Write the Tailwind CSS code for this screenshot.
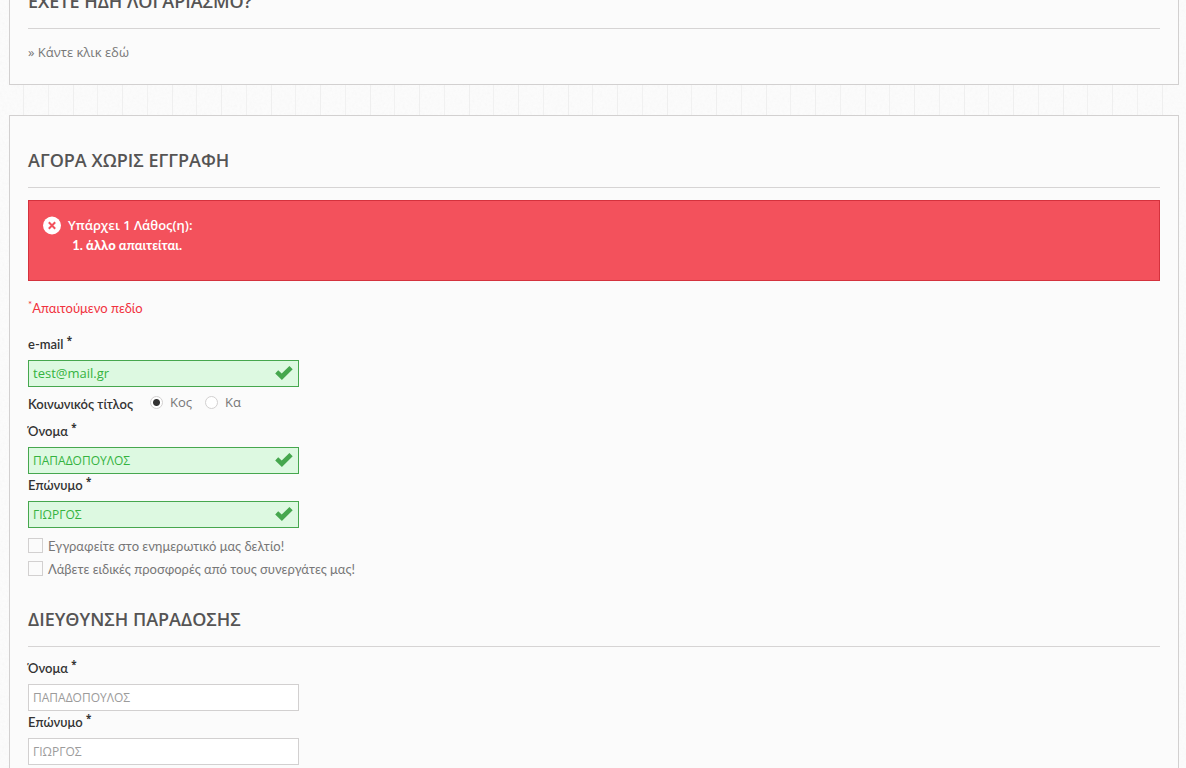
<!DOCTYPE html>
<html lang="el">
<head>
    <meta charset="UTF-8">
    <meta name="viewport" content="width=device-width, initial-scale=1.0">
    <title>Αγορά χωρίς εγγραφή</title>
    <script src="https://cdn.jsdelivr.net/npm/@tailwindcss/browser@4"></script>
</head>
<body class="relative overflow-hidden h-screen bg-[#fcfcfc] font-['Lato',sans-serif] text-[13px] leading-5 text-[#777777]">
    <!-- Paper texture -->
    <svg class="absolute inset-0 size-full opacity-[0.05]" aria-hidden="true">
        <filter id="paper">
            <feTurbulence type="fractalNoise" baseFrequency="0.4" numOctaves="2" stitchTiles="stitch"/>
            <feColorMatrix type="saturate" values="0"/>
        </filter>
        <rect width="100%" height="100%" filter="url(#paper)"/>
    </svg>

    <main class="relative -mt-11 pl-[9px] pr-[7px]">
        <div class="flex flex-col gap-[30px] bg-[linear-gradient(90deg,transparent_14px,#efefef_14px,#efefef_15px,transparent_15px,transparent_39px,#f1f1f1_39px,#f1f1f1_40px,transparent_40px,transparent_64px,#efefef_64px,#efefef_65px,transparent_65px,transparent_88px,#f1f1f1_88px,#f1f1f1_89px,transparent_89px)] bg-[length:99px_100%]">

            <!-- Existing account -->
            <section class="border border-[#d2d0d0] bg-[#fbfbfb] px-[18px] pt-[33px] pb-[22px]">
                <h3 class="border-b border-[#d6d4d4] pb-4 font-['Open_Sans',sans-serif] text-lg leading-[22px] font-semibold text-[#555454]">ΕΧΕΤΕ ΗΔΗ ΛΟΓΑΡΙΑΣΜΟ?</h3>
                <p class="mt-[13px] font-['Open_Sans',sans-serif]"><a href="#">» Κάντε κλικ εδώ</a></p>
            </section>

            <!-- Guest checkout -->
            <section class="border border-[#d2d0d0] bg-[#fbfbfb] px-[18px] pt-[33px] pb-8">
                <h3 class="border-b border-[#d6d4d4] pb-4 font-['Open_Sans',sans-serif] text-lg leading-[22px] font-semibold text-[#555454]">ΑΓΟΡΑ ΧΩΡΙΣ ΕΓΓΡΑΦΗ</h3>

                <div class="mt-3 flex gap-[6px] border border-[#d4323d] bg-[#f3515c] px-[14px] pt-[14px] pb-[25px] font-bold text-white">
                    <svg class="mt-px size-[19px]" viewBox="0 0 19 19">
                        <circle cx="9" cy="9.5" r="9" fill="#fff"/>
                        <path d="M5.8 6.3l6.4 6.4M12.2 6.3l-6.4 6.4" stroke="#f3515c" stroke-width="2"/>
                    </svg>
                    <div>
                        <p class="font-['Open_Sans',sans-serif] font-semibold">Υπάρχει 1 Λάθος(η):</p>
                        <ol class="list-decimal pl-[18px]">
                            <li><b>άλλο</b> απαιτείται.</li>
                        </ol>
                    </div>
                </div>

                <form>
                    <p class="mt-[17px] text-[#f13340]"><sup>*</sup>Απαιτούμενο πεδίο</p>

                    <div class="mt-4 flex flex-col gap-px">
                        <div>
                            <label for="email" class="block font-semibold text-[#333333]">e-mail <sup class="font-['Open_Sans',sans-serif] font-bold">*</sup></label>
                            <div class="relative mt-[6px] w-[271px]">
                                <input type="email" id="email" value="test@mail.gr" class="block h-[27px] w-full border border-[#46a74e] bg-[#ddf9e1] px-1 pb-[2px] font-['Open_Sans',sans-serif] text-[#35b33f]">
                                <svg class="absolute top-[6px] right-[6px] h-[14px] w-[18px]" viewBox="0 0 18 14"><path d="M0.2 7.4L3.2 4.3L6.7 7.6L14.4 0.1L17.7 3.3L6.9 13.9Z" fill="#46a74e"/></svg>
                            </div>
                        </div>

                        <div class="flex h-8 items-center">
                            <span class="font-semibold text-[#333333]">Κοινωνικός τίτλος</span>
                            <label class="mb-1 ml-[17px] flex items-center gap-[7px] font-['Open_Sans',sans-serif]">
                                <input type="radio" name="title" checked class="size-[13px] appearance-none rounded-full border border-[#d2d0d0] bg-white checked:bg-[radial-gradient(circle,#333333_3px,#ffffff_4px)]">
                                Κος
                            </label>
                            <label class="mb-1 ml-[13px] flex items-center gap-[7px] font-['Open_Sans',sans-serif]">
                                <input type="radio" name="title" class="size-[13px] appearance-none rounded-full border border-[#d2d0d0] bg-white checked:bg-[radial-gradient(circle,#333333_3px,#ffffff_4px)]">
                                Κα
                            </label>
                        </div>

                        <div>
                            <label for="firstname" class="block font-semibold text-[#333333]">Όνομα <sup class="font-['Open_Sans',sans-serif] font-bold">*</sup></label>
                            <div class="relative mt-[6px] w-[271px]">
                                <input type="text" id="firstname" value="ΠΑΠΑΔΟΠΟΥΛΟΣ" class="block h-[27px] w-full border border-[#46a74e] bg-[#ddf9e1] px-1 font-['Open_Sans',sans-serif] text-xs text-[#35b33f]">
                                <svg class="absolute top-[6px] right-[6px] h-[14px] w-[18px]" viewBox="0 0 18 14"><path d="M0.2 7.4L3.2 4.3L6.7 7.6L14.4 0.1L17.7 3.3L6.9 13.9Z" fill="#46a74e"/></svg>
                            </div>
                        </div>

                        <div>
                            <label for="lastname" class="block font-semibold text-[#333333]">Επώνυμο <sup class="font-['Open_Sans',sans-serif] font-bold">*</sup></label>
                            <div class="relative mt-[6px] w-[271px]">
                                <input type="text" id="lastname" value="ΓΙΩΡΓΟΣ" class="block h-[27px] w-full border border-[#46a74e] bg-[#ddf9e1] px-1 font-['Open_Sans',sans-serif] text-xs text-[#35b33f]">
                                <svg class="absolute top-[6px] right-[6px] h-[14px] w-[18px]" viewBox="0 0 18 14"><path d="M0.2 7.4L3.2 4.3L6.7 7.6L14.4 0.1L17.7 3.3L6.9 13.9Z" fill="#46a74e"/></svg>
                            </div>
                        </div>
                    </div>

                    <div class="mt-[6px]">
                        <label class="flex h-[23px] items-center gap-[5px]">
                            <input type="checkbox" class="size-[15px] appearance-none border border-[#d2d0d0] bg-[#fbfbfb] checked:bg-[#333333]">
                            Εγγραφείτε στο ενημερωτικό μας δελτίο!
                        </label>
                        <label class="flex h-[23px] items-center gap-[5px]">
                            <input type="checkbox" class="size-[15px] appearance-none border border-[#d2d0d0] bg-[#fbfbfb] checked:bg-[#333333]">
                            Λάβετε ειδικές προσφορές από τους συνεργάτες μας!
                        </label>
                    </div>

                    <!-- Delivery address -->
                    <h3 class="mt-7 border-b border-[#d6d4d4] pb-4 font-['Open_Sans',sans-serif] text-lg leading-[22px] font-semibold text-[#555454]">ΔΙΕΥΘΥΝΣΗ ΠΑΡΑΔΟΣΗΣ</h3>
                    <div class="mt-[11px] flex flex-col gap-px">
                        <div>
                            <label for="delivery-firstname" class="block font-semibold text-[#333333]">Όνομα <sup class="font-['Open_Sans',sans-serif] font-bold">*</sup></label>
                            <input type="text" id="delivery-firstname" value="ΠΑΠΑΔΟΠΟΥΛΟΣ" class="mt-[6px] block h-[27px] w-[271px] border border-[#d2d0d0] bg-white px-1 font-['Open_Sans',sans-serif] text-xs text-[#9c9b9b]">
                        </div>
                        <div>
                            <label for="delivery-lastname" class="block font-semibold text-[#333333]">Επώνυμο <sup class="font-['Open_Sans',sans-serif] font-bold">*</sup></label>
                            <input type="text" id="delivery-lastname" value="ΓΙΩΡΓΟΣ" class="mt-[6px] block h-[27px] w-[271px] border border-[#d2d0d0] bg-white px-1 font-['Open_Sans',sans-serif] text-xs text-[#9c9b9b]">
                        </div>
                    </div>
                </form>
            </section>
        </div>
    </main>
</body>
</html>
